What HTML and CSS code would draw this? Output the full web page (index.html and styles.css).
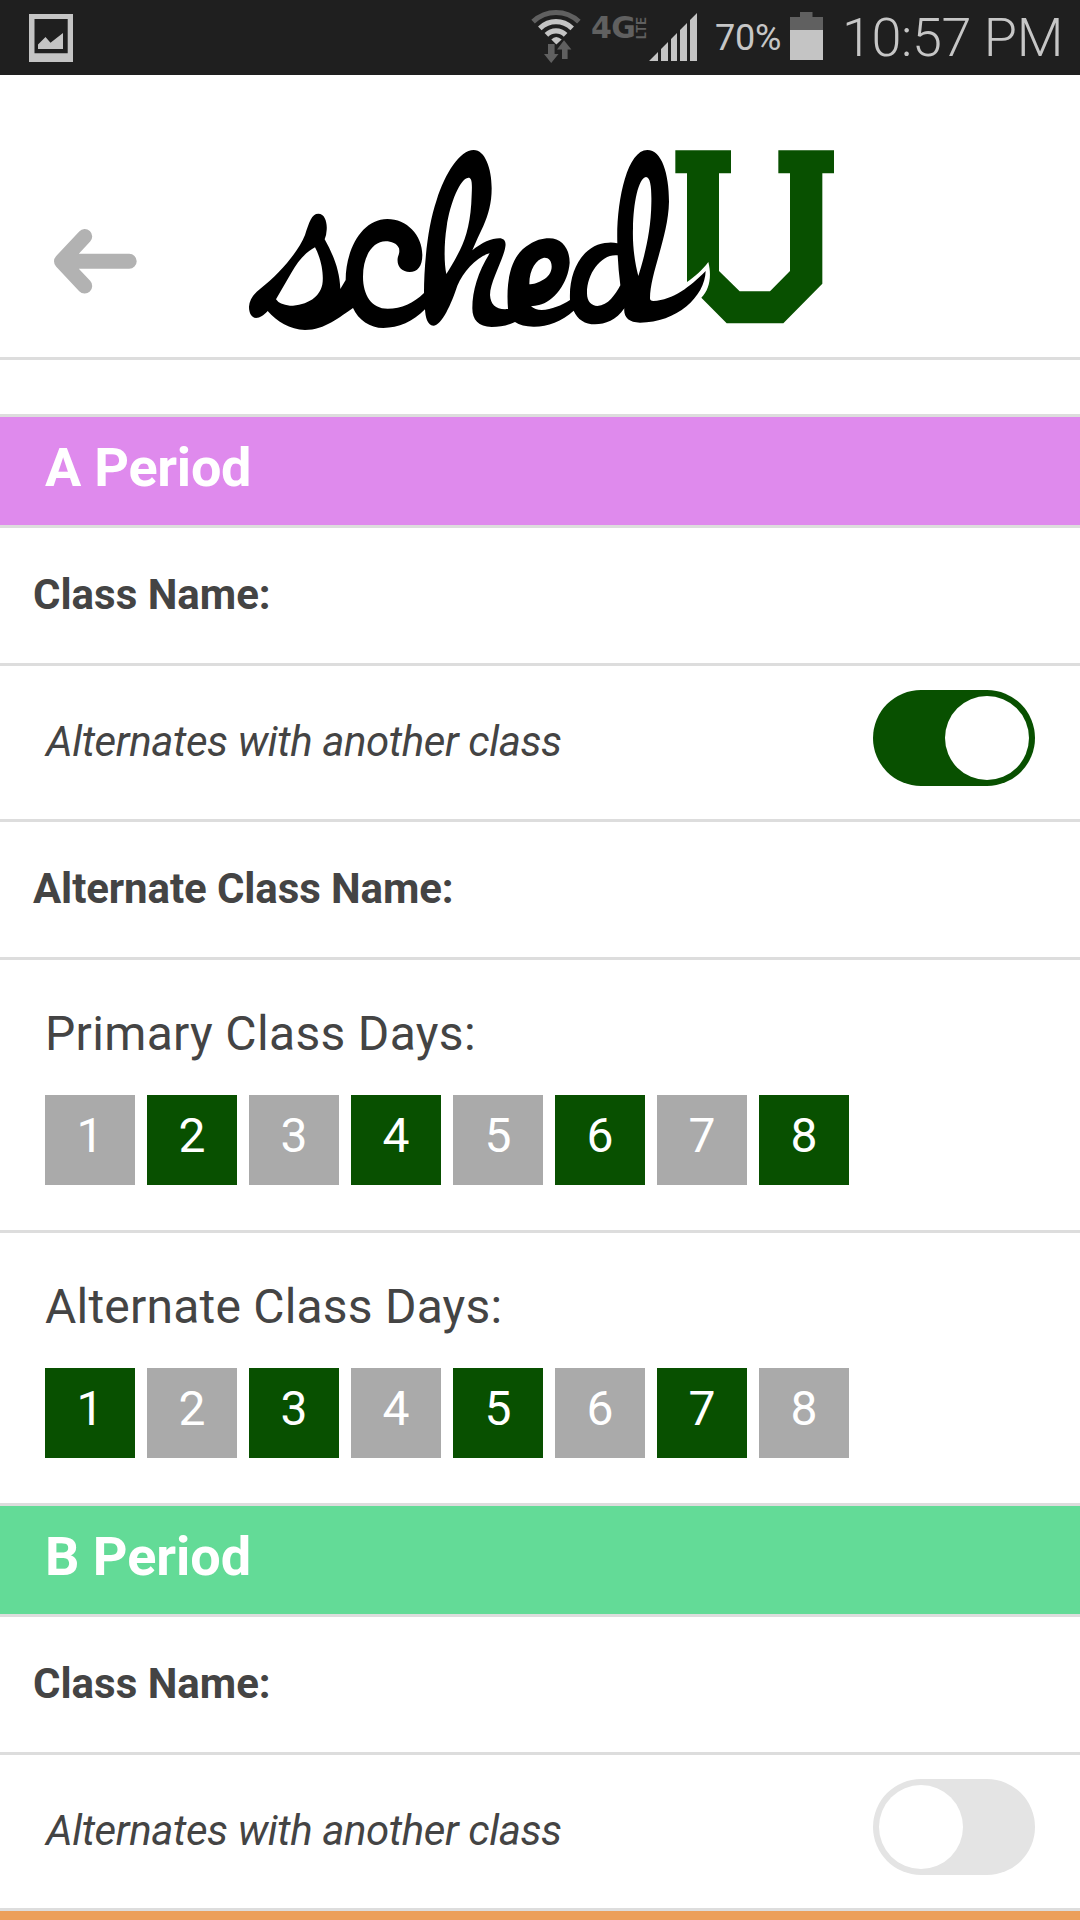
FILE: index.html
```html
<!DOCTYPE html>
<html lang="en">
<head>
<meta charset="utf-8">
<title>schedU</title>
<link rel="stylesheet" href="styles.css">
</head>
<body>
<div class="status">
  <svg class="status-photo" viewBox="29 14 44 48" width="44" height="48"><path fill="#c4c4c4" fill-rule="evenodd" d="M29 14H73V62H29ZM34.5 19V53.3H67.7V19Z"/><path fill="#c4c4c4" d="M38 49V44.5L45.5 37L50.5 42.7L63 33V49Z"/></svg>
  <div class="status-right">
    <svg class="wifi" viewBox="530 8 52 56" width="52" height="56">
      <g fill="none" stroke-width="5.2">
        <path stroke="#606060" d="M533.1 21.6Q543 12.5 556 12.5Q569 12.5 578.9 21.6"/>
        <path stroke="#c4c4c4" d="M539.8 28.3Q547 21.7 556 21.7Q565 21.7 572.2 28.3"/>
        <path stroke="#c4c4c4" d="M546.4 34.8Q550.5 30.8 556 30.8Q561.5 30.8 565.6 34.8"/>
      </g>
      <path fill="#c4c4c4" d="M551.3 39.5Q556 34.3 561.7 39.5L556.3 44.5Z"/>
      <path fill="#606060" d="M548 44H554.6V54H558.5L551.2 63L544 54H548ZM562 59V49.5H557L564 40.3L571.4 49.5H567.6V59Z"/>
    </svg>
    <span class="net">4G</span><span class="lte">LTE</span>
    <svg class="signal" viewBox="649 13 48 48" width="48" height="48"><path fill="#c4c4c4" d="M649 61L658 52V61ZM661 61V49L668 42V61ZM671 61V39L677 33V61ZM680 61V30L687 23V61ZM690 61V20L697 13V61Z"/></svg>
    <span class="percent">70%</span>
    <svg class="battery" viewBox="790 12 33 48" width="33" height="48"><path fill="#606060" d="M800 12H812.5V17H823V30H790V17H800Z"/><path fill="#c4c4c4" d="M790 30H823V60H790Z"/></svg>
    <span class="time">10:57 PM</span>
  </div>
</div>

<header class="header">
  <svg class="back" viewBox="53 228 85 67" width="85" height="67" role="img" aria-label="Back"><path fill="none" stroke="#b2b2b2" stroke-width="15" stroke-linecap="round" stroke-linejoin="round" d="M84.7 236.5L61.5 261.3L84.7 286M66 261.3H129.2"/></svg>
  <svg class="logo" viewBox="0 0 1800 600" width="600" height="200" role="img" aria-label="schedU">
    <path fill-rule="evenodd" d="M235 221C255 221 262 248 260 270Q259 288 254 298C280 345 299 390 301 447L317 420C317 330 365 237 442 237C500 237 547 285 547 345C547 380 532 396 509 396C485 396 470 378 473 355C475 343 480 340 477 325C470 310 455 304 437 304C400 304 369 345 369 410C369 465 395 506 443 506C485 506 520 490 552 459C552 380 562 260 590 180C615 100 660 30 701 30C735 30 755 85 755 145C755 190 745 225 730 258Q712 295 697 331C725 308 755 295 778 295C792 295 799 304 796 320C790 360 750 425 750 465C752 495 768 510 804 507C798 430 808 345 870 312C885 302 905 295 928 295C965 295 989 325 989 368C985 430 940 485 897 495Q885 498 873 499Q885 510 905 510C935 509 965 496 990 480C985 380 1040 308 1105 308Q1120 307 1132 310C1128 190 1160 30 1222 30C1265 30 1287 100 1287 185C1285 290 1230 400 1230 475Q1230 483 1240 483C1300 480 1350 440 1397 393C1395 470 1310 548 1200 548C1165 548 1150 530 1153 505C1130 540 1095 553 1065 553C1035 553 1012 538 1001 512C965 545 920 561 880 560Q845 560 825 546C800 557 780 561 755 561C715 560 697 540 697 505C697 450 715 395 749 340C710 350 670 395 652 437C635 490 605 557 580 557C562 557 556 530 555 508C520 545 475 564 430 564C390 564 355 540 339 504C300 530 255 570 195 570C150 568 110 545 83 513C72 525 60 534 48 534C35 533 27 520 27 500C28 480 40 462 60 447C120 400 175 335 195 285C208 245 215 221 235 221Z
    M225 322C245 360 250 400 248 425C245 470 200 497 150 497Q118 494 108 478L155 397C175 360 200 335 225 322Z
    M685 113C695 113 697 125 695 165C693 240 680 290 660 330C645 360 630 385 619 402C612 370 612 310 620 260C630 190 660 115 685 113Z
    M868 433C890 432 935 415 935 380C935 360 925 352 912 353C890 358 868 385 868 433Z
    M1218 111C1232 112 1235 145 1234 190C1233 280 1210 360 1195 408C1185 370 1177 320 1179 265C1180 190 1195 115 1218 111Z
    M1133 346C1085 340 1040 400 1041 460C1041 485 1055 498 1072 498C1105 496 1125 465 1141 436Q1135 390 1133 346Z"/>
    <path fill="#085000" d="M1306 31H1473V100H1437V393L1499 454H1590L1650 393V100H1615V31H1782V100H1747V431L1630 550H1460L1384 473C1408 450 1416 410 1405 366C1385 392 1365 410 1341 426V100H1306Z"/>
  </svg>
</header>

<main class="periods">
  <section>
    <h2 class="period violet"><span class="title">A Period</span></h2>
    <div class="row name"><span class="name-text">Class Name:</span></div>
    <div class="row alternates"><span class="alt-text">Alternates with another class</span><span class="toggle on"><span class="knob"></span></span></div>
    <div class="row name"><span class="name-text alternate-name">Alternate Class Name:</span></div>
    <div class="row days">
      <span class="label primary">Primary Class Days:</span>
      <div class="boxes"><span>1</span><span class="picked">2</span><span>3</span><span class="picked">4</span><span>5</span><span class="picked">6</span><span>7</span><span class="picked">8</span></div>
    </div>
    <div class="row days">
      <span class="label">Alternate Class Days:</span>
      <div class="boxes"><span class="picked">1</span><span>2</span><span class="picked">3</span><span>4</span><span class="picked">5</span><span>6</span><span class="picked">7</span><span>8</span></div>
    </div>
  </section>
  <section>
    <h2 class="period green"><span class="title">B Period</span></h2>
    <div class="row name"><span class="name-text">Class Name:</span></div>
    <div class="row alternates"><span class="alt-text">Alternates with another class</span><span class="toggle"><span class="knob"></span></span></div>
  </section>
  <div class="next-period"></div>
</main>
</body>
</html>
```
FILE: styles.css
```css
* { box-sizing: border-box; }
html { background: #fff; }
body {
  margin: 0;
  width: 1080px;
  height: 1920px;
  overflow: hidden;
  font-family: Roboto, "Noto Sans", sans-serif;
  color: #444;
  background: #fff;
}
svg { display: block; flex: none; }

.status {
  height: 75px;
  background: #1f1f1f;
  color: #c6c6c6;
  display: flex;
  justify-content: space-between;
  padding: 0 17px 0 29px;
}
.status-photo { margin-top: 14px; }
.status-right { display: flex; width: 533px; white-space: nowrap; }
.wifi { margin-top: 8px; }
.net {
  width: 46px;
  margin-left: 9px;
  font: bold 30px/30px "DejaVu Sans", sans-serif;
  letter-spacing: -0.5px;
  color: #606060;
  padding-top: 13px;
}
.lte {
  writing-mode: vertical-rl;
  transform: rotate(180deg);
  width: 12px;
  height: 24px;
  margin: 15px 0 0 0;
  font: bold 12.5px/12px Inter, sans-serif;
  color: #606060;
}
.signal { margin: 13px 0 0 1px; }
.percent { width: 75px; flex: none; margin-left: 18px; font-size: 36px; line-height: 77px; letter-spacing: -0.2px; }
.battery { margin-top: 12px; }
.time { margin-left: 19px; font-size: 54px; line-height: 75px; font-weight: 300; letter-spacing: -0.4px; }

.header {
  height: 285px;
  border-bottom: 3px solid #ddd;
  display: flex;
  align-items: flex-start;
}
.back { margin: 153px 0 0 53px; }
.logo { margin: 65px 0 0 102px; }

.periods { padding-top: 54px; }
.period {
  margin: 0;
  height: 114px;
  border-top: 3px solid #ddd;
  border-bottom: 3px solid #ddd;
  padding-left: 45px;
  color: #fff;
  font-size: 54px;
  line-height: 101px;
  font-weight: 700;
}
.violet { background: #df8aed; letter-spacing: -0.25px; }
.green { background: #63db97; border-top: 0; height: 111px; letter-spacing: -0.05px; }
.next-period { height: 9px; background: #ec9f5a; }

.row { border-bottom: 3px solid #ddd; }
.name {
  height: 138px;
  padding-left: 33px;
  font-size: 42px;
  line-height: 133px;
  font-weight: 700;
}
.alternate-name { letter-spacing: -0.1px; }
.alternates {
  height: 156px;
  padding: 0 45px 0 46px;
  display: flex;
  justify-content: space-between;
  font-size: 42px;
  line-height: 151px;
  font-style: italic;
  letter-spacing: -0.41px;
}
.toggle {
  width: 162px;
  height: 96px;
  margin-top: 24px;
  padding: 6px;
  border-radius: 48px;
  background: #e4e4e4;
  display: flex;
}
.toggle.on { background: #085000; justify-content: flex-end; }
.knob { width: 84px; height: 84px; border-radius: 50%; background: #fff; }

.days {
  height: 273px;
  padding: 45px 45px 0;
  display: flex;
  flex-direction: column;
  align-items: flex-start;
  gap: 33px;
  font-size: 48px;
}
.label { line-height: 57px; letter-spacing: 0.21px; }
.primary { letter-spacing: 0.33px; }
.boxes { display: flex; gap: 12px; }
.boxes span {
  width: 90px;
  height: 90px;
  background: #aaa;
  color: #fff;
  text-align: center;
  line-height: 81px;
}
.boxes .picked { background: #085000; }
```
